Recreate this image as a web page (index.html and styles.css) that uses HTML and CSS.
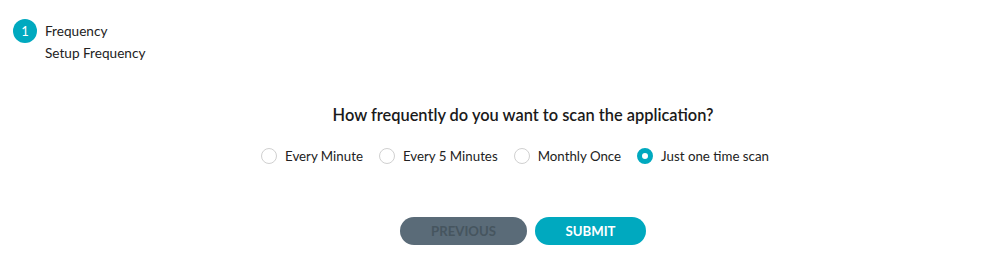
FILE: index.html
```html
<!DOCTYPE html>
<html>
<head>
<meta charset="utf-8">
<link rel="stylesheet" href="styles.css">
</head>
<body>
<div class="stepper">
  <div class="step">
    <div class="step-num">1</div>
    <div class="step-text">
      <div class="step-title">Frequency</div>
      <div class="step-sub">Setup Frequency</div>
    </div>
  </div>
</div>
<div class="content">
  <h2 class="question">How frequently do you want to scan the application?</h2>
  <div class="options">
    <label class="option"><span class="radio"></span>Every Minute</label>
    <label class="option"><span class="radio"></span>Every 5 Minutes</label>
    <label class="option"><span class="radio"></span>Monthly Once</label>
    <label class="option"><span class="radio checked"></span>Just one time scan</label>
  </div>
  <div class="actions">
    <button class="btn btn-prev">PREVIOUS</button>
    <button class="btn btn-submit">SUBMIT</button>
  </div>
</div>
</body>
</html>
```
FILE: styles.css
```css
html, body {
  margin: 0;
  padding: 0;
  background: #fff;
}
body {
  font-family: Lato, "Open Sans", sans-serif;
  color: #222;
  font-size: 14px;
}
.stepper {
  padding: 19px 13px 0;
}
.step {
  display: flex;
  align-items: flex-start;
  gap: 8px;
}
.step-num {
  width: 24px;
  height: 24px;
  border-radius: 50%;
  background: #00a9bf;
  color: #fff;
  font-size: 13px;
  display: flex;
  align-items: center;
  justify-content: center;
  flex: none;
}
.step-text {
  line-height: 22px;
  padding-top: 1px;
  font-size: 13.6px;
}
.content {
  display: flex;
  flex-direction: column;
  align-items: center;
  padding-left: 52px;
}
.question {
  margin: 40px 0 0;
  font-size: 16.4px;
  font-weight: 600;
  line-height: 22px;
  color: #1a1a1a;
}
.options {
  display: flex;
  margin-top: 20px;
}
.option {
  display: flex;
  align-items: center;
  gap: 8px;
  margin-right: 16px;
  font-size: 13.3px;
  line-height: 20px;
  color: #222;
}
.radio {
  width: 16px;
  height: 16px;
  box-sizing: border-box;
  border-radius: 50%;
  border: 1px solid #d0d0d0;
  background: #fff;
  flex: none;
}
.radio.checked {
  border: 5px solid #00a9bf;
}
.actions {
  display: flex;
  gap: 8px;
  margin-top: 51px;
}
.btn {
  height: 28px;
  border: none;
  border-radius: 14px;
  font-family: Lato, "Open Sans", sans-serif;
  font-size: 13.2px;
  font-weight: 700;
  padding: 0;
  cursor: pointer;
}
.btn-prev {
  width: 127px;
  background: #5a6b78;
  color: #46555f;
}
.btn-submit {
  width: 111px;
  background: #00a9bf;
  color: #fff;
}
```
